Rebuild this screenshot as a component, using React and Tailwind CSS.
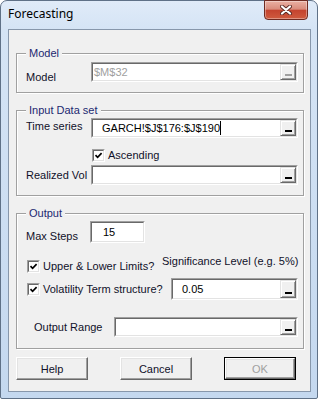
import React from 'react';

// Classic sunken 3D edge used by text boxes and check boxes
function Sunken({ className = '', children }) {
  return (
    <div
      className={`flex border border-t-[#a0a0a0] border-l-[#a0a0a0] border-r-white border-b-white ${className}`}
    >
      <div className="flex flex-1 min-w-0 bg-white border border-t-[#696969] border-l-[#696969] border-r-[#e3e3e3] border-b-[#e3e3e3]">
        {children}
      </div>
    </div>
  );
}

// The little "_" button at the end of a RefEdit box
function Picker({ disabled = false }) {
  return (
    <div className="w-[16px] flex items-end justify-center pb-[3px] bg-[#f0f0f0] border border-t-[#e3e3e3] border-l-[#e3e3e3] border-r-[#696969] border-b-[#696969] shadow-[inset_1px_1px_0_#fff,inset_-1px_-1px_0_#a0a0a0]">
      <div className={`w-[7px] h-[2px] ${disabled ? 'bg-[#a0a0a0]' : 'bg-black'}`} />
    </div>
  );
}

function RefEdit({ className = '', value = '', pad = 'pl-[2px]', textClass = 'text-black', disabled = false, caret = false }) {
  return (
    <Sunken className={className}>
      <div className={`flex-1 flex items-center ${pad} ${textClass} whitespace-nowrap overflow-hidden`}>
        <span className="leading-[14px]">{value}</span>
        {caret && <span className="w-px h-[14px] bg-black" />}
      </div>
      <Picker disabled={disabled} />
    </Sunken>
  );
}

function Check({ label }) {
  return (
    <div className="flex items-center">
      <Sunken className="w-[13px] h-[13px] shrink-0">
        <svg viewBox="0 0 9 9" className="w-[9px] h-[9px]">
          <path d="M1.5 4.2 L3.6 6.3 L7.6 2.2" stroke="#000" strokeWidth="1.7" fill="none" />
        </svg>
      </Sunken>
      <span className="ml-[3px] leading-[14px] whitespace-nowrap">{label}</span>
    </div>
  );
}

function Group({ title, className = '', children }) {
  return (
    <fieldset
      className={`border border-[#a0a0a0] shadow-[inset_1px_1px_0_#fff,1px_1px_0_#fff] pl-[9px] pr-[5px] ${className}`}
    >
      <legend className="px-[3px] leading-[14px] bg-[#f0f0f0] text-[#1c2870]">{title}</legend>
      {children}
    </fieldset>
  );
}

function DlgButton({ children, isDefault = false, disabled = false }) {
  return (
    <div className={`w-[72px] h-[23px] flex ${isDefault ? 'border border-black' : ''}`}>
      <div className="flex-1 flex items-center justify-center bg-[#f0f0f0] border border-t-white border-l-white border-r-[#696969] border-b-[#696969] shadow-[inset_-1px_-1px_0_#a0a0a0,inset_1px_1px_0_#e3e3e3]">
        <span className={`leading-[14px] ${disabled ? 'text-[#a0a0a0]' : 'text-[#10102a]'}`}>{children}</span>
      </div>
    </div>
  );
}

export default function App() {
  return (
    <div className="w-[318px] h-[399px] flex flex-col border border-[#5f7187] rounded-t-[7px] rounded-b-[2px] bg-[linear-gradient(180deg,#e0ebf8_0px,#d5e4f5_28px,#c4d8ef_100%)] font-['Liberation_Sans',Arial,sans-serif] text-[11px] text-[#10102a]">
      {/* Title bar */}
      <div className="h-[28px] flex items-start pl-[7px] pr-[9px]">
        <span className="mt-[5px] font-['Noto_Sans','Open_Sans',sans-serif] text-[12px] leading-[16px] text-black">
          Forecasting
        </span>
        <div className="ml-auto -mt-px w-[44px] h-[20px] flex items-center justify-center rounded-b-[4px] border border-[#6e2b22] shadow-[inset_0_0_0_1px_rgba(255,255,255,0.35)] bg-[linear-gradient(180deg,#eab0a3_0%,#d98c7c_45%,#c4442f_52%,#cf5b3f_100%)]">
          <svg viewBox="0 0 12 10" className="w-[12px] h-[10px]">
            <path d="M2 1.5 L10 8.5 M10 1.5 L2 8.5" stroke="#5a2a24" strokeWidth="4" strokeLinecap="round" />
            <path d="M2 1.5 L10 8.5 M10 1.5 L2 8.5" stroke="#fff" strokeWidth="2.2" strokeLinecap="round" />
          </svg>
        </div>
      </div>

      {/* Client area */}
      <div className="flex-1 flex px-[7px] pb-[6px]">
        <div className="flex-1 flex flex-col bg-[#f0f0f0] border border-[#8797ab] pt-[16px] pl-[7px] pr-[6px]">
          <Group title="Model" className="pb-[10px]">
            <div className="flex items-start h-[20px] mt-[2px]">
              <span className="w-[65px] pt-[8px] leading-[14px]">Model</span>
              <RefEdit className="flex-1 h-[20px]" value="$M$32" pad="pl-[1px]" textClass="text-[#a0a0a0]" disabled />
            </div>
          </Group>

          <Group title="Input Data set" className="mt-[10px] pb-[10px]">
            <div className="flex items-start mt-[1px]">
              <span className="w-[65px] pt-[1px] leading-[14px]">Time series</span>
              <RefEdit className="flex-1 h-[20px]" value="GARCH!$J$176:$J$190" pad="pl-[9px]" caret />
            </div>
            <div className="mt-[10px] pl-[66px]">
              <Check label="Ascending" />
            </div>
            <div className="flex items-center mt-[3px]">
              <span className="w-[65px] leading-[14px]">Realized Vol</span>
              <RefEdit className="flex-1 h-[20px]" />
            </div>
          </Group>

          <Group title="Output" className="mt-[10px] pb-[11px]">
            <div className="flex items-start h-[22px] mt-[1px]">
              <span className="w-[64px] pt-[8px] leading-[14px]">Max Steps</span>
              <Sunken className="w-[55px] h-[22px]">
                <div className="flex items-center pl-[11px] leading-[14px] text-black">15</div>
              </Sunken>
            </div>
            <div className="flex items-start mt-[11px]">
              <div className="w-[136px] pl-[1px] pt-[5px]">
                <Check label="Upper & Lower Limits?" />
              </div>
              <span className="leading-[14px] whitespace-nowrap">Significance Level (e.g. 5%)</span>
            </div>
            <div className="flex items-center mt-[5px]">
              <div className="w-[145px] pl-[1px]">
                <Check label="Volatility Term structure?" />
              </div>
              <RefEdit className="flex-1 h-[22px]" value="0.05" pad="pl-[9px]" />
            </div>
            <div className="flex items-center mt-[17px] pl-[8px]">
              <span className="w-[80px] leading-[14px]">Output Range</span>
              <RefEdit className="flex-1 h-[20px]" />
            </div>
          </Group>

          <div className="flex gap-[32px] mt-[8px]">
            <DlgButton>Help</DlgButton>
            <DlgButton>Cancel</DlgButton>
            <DlgButton isDefault disabled>OK</DlgButton>
          </div>
        </div>
      </div>
    </div>
  );
}
